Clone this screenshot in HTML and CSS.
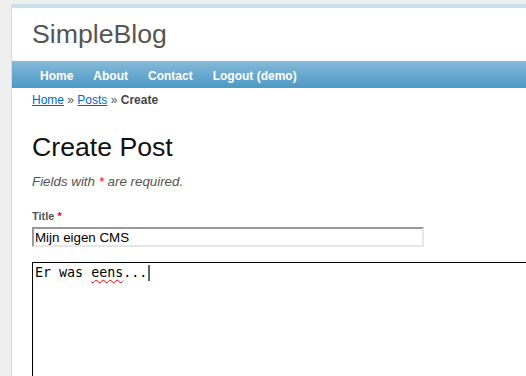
FILE: index.html
```html
<!DOCTYPE html>
<html lang="nl">
<head>
<meta charset="utf-8">
<title>SimpleBlog - Create Post</title>
<link rel="stylesheet" href="styles.css">
</head>
<body>
<div class="page">
  <div class="header">
    <div class="logo">SimpleBlog</div>
  </div>
  <nav class="mainmenu">
    <ul class="menu-list">
      <li><a href="#">Home</a></li>
      <li><a href="#">About</a></li>
      <li><a href="#">Contact</a></li>
      <li><a href="#">Logout (demo)</a></li>
    </ul>
  </nav>
  <div class="breadcrumbs">
    <a href="#">Home</a> &raquo; <a href="#">Posts</a> &raquo; <span class="current">Create</span>
  </div>
  <div class="content">
    <h1 class="title">Create Post</h1>
    <p class="note">Fields with <span class="required">*</span> are required.</p>
    <div class="row">
      <label class="label">Title <span class="required">*</span></label>
      <input class="text-input" type="text" value="Mijn eigen CMS">
    </div>
    <div class="row">
      <div class="textarea">Er was <span class="misspelt">eens</span>...<span class="caret"></span></div>
    </div>
  </div>
</div>
</body>
</html>
```
FILE: styles.css
```css
html {
  background: #efefef;
  overflow: hidden;
}
body {
  margin: 0;
  padding: 4px 0 0 11px;
  font-family: "Liberation Sans", Arial, sans-serif;
  font-size: 13.33px;
  color: #555;
}
.page {
  box-sizing: border-box;
  width: calc(100vw - 11px);
  height: calc(100vh - 4px);
  overflow: hidden;
  background: #fff;
  border-left: 1px solid #c9e0ed;
  border-top: 1px solid #c9e0ed;
}
.header {
  border-top: 3px solid #c9e0ed;
}
.logo {
  padding: 11px 20px 11px 20px;
  font-size: 26.67px;
  color: #555;
}
.mainmenu {
  height: 27px;
  box-sizing: border-box;
  padding-top: 8px;
  background: linear-gradient(to bottom, #86b9d8 0%, #6aa9cf 50%, #4d99c8 100%);
}
.menu-list {
  list-style: none;
  margin: 0;
  padding: 0 20px;
  display: flex;
  gap: 4px;
}
.menu-list a {
  display: block;
  padding: 0 8px;
  color: #fff;
  font-size: 12px;
  font-weight: bold;
  line-height: 14px;
  text-decoration: none;
}
.breadcrumbs {
  padding: 5px 20px;
  font-size: 12px;
  color: #555;
}
.breadcrumbs a {
  color: #0066cc;
  text-decoration: underline;
}
.breadcrumbs .current {
  font-weight: bold;
  color: #444;
}
.content {
  padding: 20px;
}
.title {
  margin: 0 0 10.5px 0;
  font-size: 26.67px;
  font-weight: normal;
  color: #111;
}
.note {
  margin: 0 0 21.7px 0;
  font-style: italic;
}
.required {
  color: #f00;
}
.label {
  display: block;
  font-size: 11px;
  font-weight: bold;
  color: #555;
  margin-bottom: 5.3px;
}
.text-input {
  display: block;
  box-sizing: border-box;
  width: 392px;
  height: 20px;
  margin: 0 0 15px 0;
  padding: 0 1px;
  font-family: "Liberation Sans", Arial, sans-serif;
  font-size: 13.33px;
  color: #000;
  background: #fff;
  border-style: solid;
  border-width: 2px;
  border-color: #999 #e6e6e6 #e6e6e6 #999;
  outline: none;
}
.textarea {
  width: 520px;
  height: 200px;
  border: 1px solid #000;
  padding: 2px;
  font-family: "DejaVu Sans Mono", "Liberation Mono", monospace;
  font-size: 13.33px;
  color: #000;
  white-space: pre;
}
.misspelt {
  text-decoration: underline wavy #e00;
  text-decoration-thickness: 1px;
  text-decoration-skip-ink: none;
  text-underline-offset: 2px;
}
.caret {
  display: inline-block;
  width: 1.5px;
  height: 16px;
  background: #666;
  vertical-align: -4px;
  margin-left: 1px;
}
```
